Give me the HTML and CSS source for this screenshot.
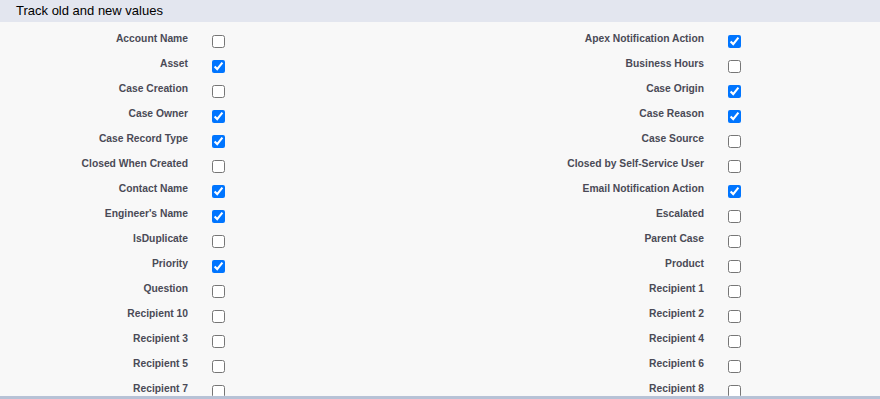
FILE: index.html
```html
<!DOCTYPE html>
<html lang="en">
<head>
    <meta charset="UTF-8" />
    <title>Field History Tracking</title>
    <link rel="stylesheet" href="styles.css">
</head>
<body>
<div class="panel">
    <div class="sub-header">
        <h3>Track old and new values</h3>
    </div>
    <div class="field-list">
        <label class="field-label" for="f1">Account Name</label>
        <div class="field-data"><input type="checkbox" id="f1"></div>
        <label class="field-label" for="f2">Apex Notification Action</label>
        <div class="field-data"><input type="checkbox" id="f2" checked></div>

        <label class="field-label" for="f3">Asset</label>
        <div class="field-data"><input type="checkbox" id="f3" checked></div>
        <label class="field-label" for="f4">Business Hours</label>
        <div class="field-data"><input type="checkbox" id="f4"></div>

        <label class="field-label" for="f5">Case Creation</label>
        <div class="field-data"><input type="checkbox" id="f5"></div>
        <label class="field-label" for="f6">Case Origin</label>
        <div class="field-data"><input type="checkbox" id="f6" checked></div>

        <label class="field-label" for="f7">Case Owner</label>
        <div class="field-data"><input type="checkbox" id="f7" checked></div>
        <label class="field-label" for="f8">Case Reason</label>
        <div class="field-data"><input type="checkbox" id="f8" checked></div>

        <label class="field-label" for="f9">Case Record Type</label>
        <div class="field-data"><input type="checkbox" id="f9" checked></div>
        <label class="field-label" for="f10">Case Source</label>
        <div class="field-data"><input type="checkbox" id="f10"></div>

        <label class="field-label" for="f11">Closed When Created</label>
        <div class="field-data"><input type="checkbox" id="f11"></div>
        <label class="field-label" for="f12">Closed by Self-Service User</label>
        <div class="field-data"><input type="checkbox" id="f12"></div>

        <label class="field-label" for="f13">Contact Name</label>
        <div class="field-data"><input type="checkbox" id="f13" checked></div>
        <label class="field-label" for="f14">Email Notification Action</label>
        <div class="field-data"><input type="checkbox" id="f14" checked></div>

        <label class="field-label" for="f15">Engineer's Name</label>
        <div class="field-data"><input type="checkbox" id="f15" checked></div>
        <label class="field-label" for="f16">Escalated</label>
        <div class="field-data"><input type="checkbox" id="f16"></div>

        <label class="field-label" for="f17">IsDuplicate</label>
        <div class="field-data"><input type="checkbox" id="f17"></div>
        <label class="field-label" for="f18">Parent Case</label>
        <div class="field-data"><input type="checkbox" id="f18"></div>

        <label class="field-label" for="f19">Priority</label>
        <div class="field-data"><input type="checkbox" id="f19" checked></div>
        <label class="field-label" for="f20">Product</label>
        <div class="field-data"><input type="checkbox" id="f20"></div>

        <label class="field-label" for="f21">Question</label>
        <div class="field-data"><input type="checkbox" id="f21"></div>
        <label class="field-label" for="f22">Recipient 1</label>
        <div class="field-data"><input type="checkbox" id="f22"></div>

        <label class="field-label" for="f23">Recipient 10</label>
        <div class="field-data"><input type="checkbox" id="f23"></div>
        <label class="field-label" for="f24">Recipient 2</label>
        <div class="field-data"><input type="checkbox" id="f24"></div>

        <label class="field-label" for="f25">Recipient 3</label>
        <div class="field-data"><input type="checkbox" id="f25"></div>
        <label class="field-label" for="f26">Recipient 4</label>
        <div class="field-data"><input type="checkbox" id="f26"></div>

        <label class="field-label" for="f27">Recipient 5</label>
        <div class="field-data"><input type="checkbox" id="f27"></div>
        <label class="field-label" for="f28">Recipient 6</label>
        <div class="field-data"><input type="checkbox" id="f28"></div>

        <label class="field-label" for="f29">Recipient 7</label>
        <div class="field-data"><input type="checkbox" id="f29"></div>
        <label class="field-label" for="f30">Recipient 8</label>
        <div class="field-data"><input type="checkbox" id="f30"></div>
    </div>
</div>
</body>
</html>
```

FILE: styles.css
```css
body {
  margin: 0;
  font-family: Arial, "Liberation Sans", sans-serif;
  background-color: #f8f8f8;
}

.panel {
  height: 399px;
  box-sizing: border-box;
  border-bottom: 3px solid #b7c2d6;
  overflow: hidden;
}

.sub-header {
  background-color: #e3e6ef;
  height: 22px;
  padding-left: 16px;
}

.sub-header h3 {
  margin: 0;
  font-size: 13px;
  font-weight: normal;
  line-height: 22px;
  color: #000;
}

.field-list {
  display: grid;
  grid-template-columns: 200px 316px 200px 1fr;
  grid-auto-rows: 25px;
  padding-top: 8px;
}

.field-label {
  text-align: right;
  padding-right: 12px;
  padding-top: 2px;
  font-size: 10.3px;
  font-weight: bold;
  line-height: 13px;
  color: #4a4a56;
}

.field-data {
  padding-left: 12px;
}

.field-data input {
  margin: 5px 0 0 0;
  width: 13px;
  height: 13px;
}
```
